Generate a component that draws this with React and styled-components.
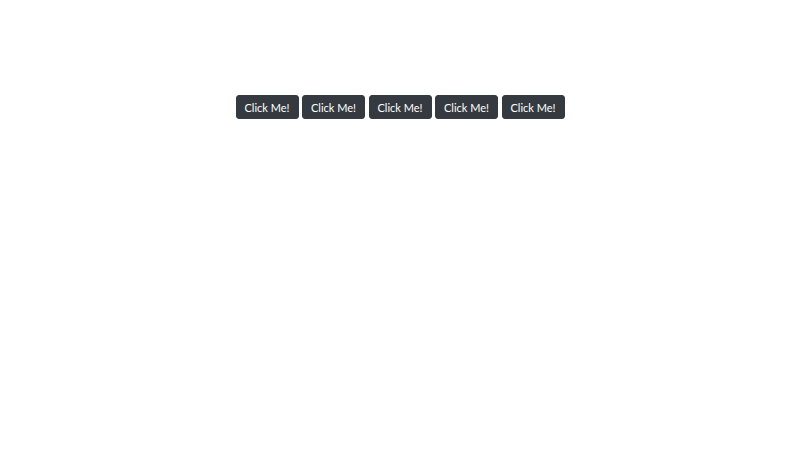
import React from 'react'
import styled, { createGlobalStyle } from 'styled-components'

const GlobalStyle = createGlobalStyle`
    html, body {
        margin: 0;
        padding: 0;
        background: #fff;
        font-family: Lato, "Liberation Sans", sans-serif;
    }
`

const Page = styled.div`
    width: 100%;
    height: 453px;
    padding-top: 95px;
    box-sizing: border-box;
`

const ButtonRow = styled.div`
    display: flex;
    justify-content: center;
    gap: 3.5px;
`

const Button = styled.button`
    width: 63px;
    height: 24px;
    padding: 0;
    border: 1px solid #343a40;
    border-radius: 3px;
    background: #343a40;
    color: #fff;
    font-family: Lato, "Liberation Sans", sans-serif;
    font-size: 11px;
    cursor: pointer;
    &:hover{
        background: #23272b;
    }
`

export default function App() {
    const buttons = [1, 2, 3, 4, 5]
    return (
        <Page>
            <GlobalStyle />
            <ButtonRow>
                {buttons.map(i => (
                    <Button key={i}>Click Me!</Button>
                ))}
            </ButtonRow>
        </Page>
    )
}
